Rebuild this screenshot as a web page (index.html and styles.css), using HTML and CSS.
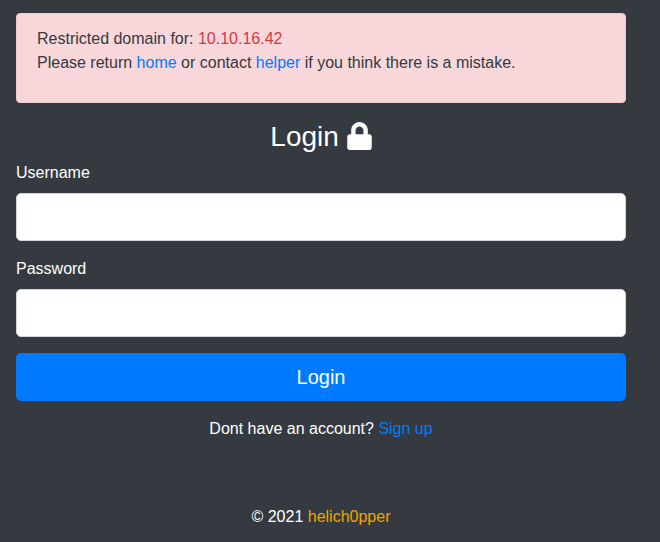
FILE: index.html
```html
<!DOCTYPE html>
<html lang="en">
<head>
<meta charset="utf-8">
<meta name="viewport" content="width=device-width, initial-scale=1">
<title>Login</title>
<link rel="stylesheet" href="styles.css">
</head>
<body>
<main class="page">
  <div class="alert" role="alert">
    <p>Restricted domain for: <span class="danger">10.10.16.42</span><br>
    Please return <a href="#home">home</a> or contact <a href="#helper">helper</a> if you think there is a mistake.</p>
  </div>
  <form class="login">
    <h1 class="title">Login
      <svg class="lock" viewBox="0 0 448 512" aria-hidden="true"><path fill="currentColor" d="M400 224h-24v-72C376 68.2 307.8 0 224 0S72 68.2 72 152v72H48c-26.5 0-48 21.5-48 48v192c0 26.5 21.5 48 48 48h352c26.5 0 48-21.5 48-48V272c0-26.5-21.5-48-48-48zm-104 0H152v-72c0-39.7 32.3-72 72-72s72 32.3 72 72v72z"/></svg>
    </h1>
    <div class="field">
      <label for="username">Username</label>
      <input class="control" id="username" type="text">
    </div>
    <div class="field">
      <label for="password">Password</label>
      <input class="control" id="password" type="password">
    </div>
    <button class="submit" type="submit">Login</button>
  </form>
  <p class="signup">Dont have an account? <a href="#signup">Sign up</a></p>
  <footer class="footer">© 2021 <a class="author" href="#author">helich0pper</a></footer>
</main>
</body>
</html>
```
FILE: styles.css
```css
* {
  box-sizing: border-box;
}

body {
  margin: 0;
  background: #353a41;
  color: #fff;
  font: 16px/24px "Liberation Sans", Arial, sans-serif;
}

a {
  color: #007bff;
  text-decoration: none;
}

p {
  margin: 0;
}

.page {
  padding: 13px 34px 12px 16px;
}

.alert {
  padding: 13px 20px 27px;
  margin-bottom: 16px;
  border: 1px solid #f5c6cb;
  border-radius: 4px;
  background: #f8d7da;
  color: #343a40;
}

.danger {
  color: #dc3545;
}

.title {
  margin: 0 0 6px;
  font-size: 28px;
  font-weight: 400;
  line-height: 36px;
  text-align: center;
}

.lock {
  width: 25px;
  height: 28px;
  vertical-align: -4px;
}

.field {
  margin-bottom: 16px;
}

label {
  display: block;
  margin-bottom: 8px;
}

.control {
  display: block;
  width: 100%;
  height: 48px;
  padding: 8px 16px;
  border: 1px solid #ced4da;
  border-radius: 5px;
  background: #fff;
  color: #495057;
  font: inherit;
  font-size: 20px;
}

.submit {
  display: block;
  width: 100%;
  height: 48px;
  border: 0;
  border-radius: 5px;
  background: #007bff;
  color: #fff;
  font: inherit;
  font-size: 20px;
}

.signup,
.footer {
  text-align: center;
}

.signup {
  margin: 16px 0 64px;
}

.author {
  color: #f0a500;
}
```
